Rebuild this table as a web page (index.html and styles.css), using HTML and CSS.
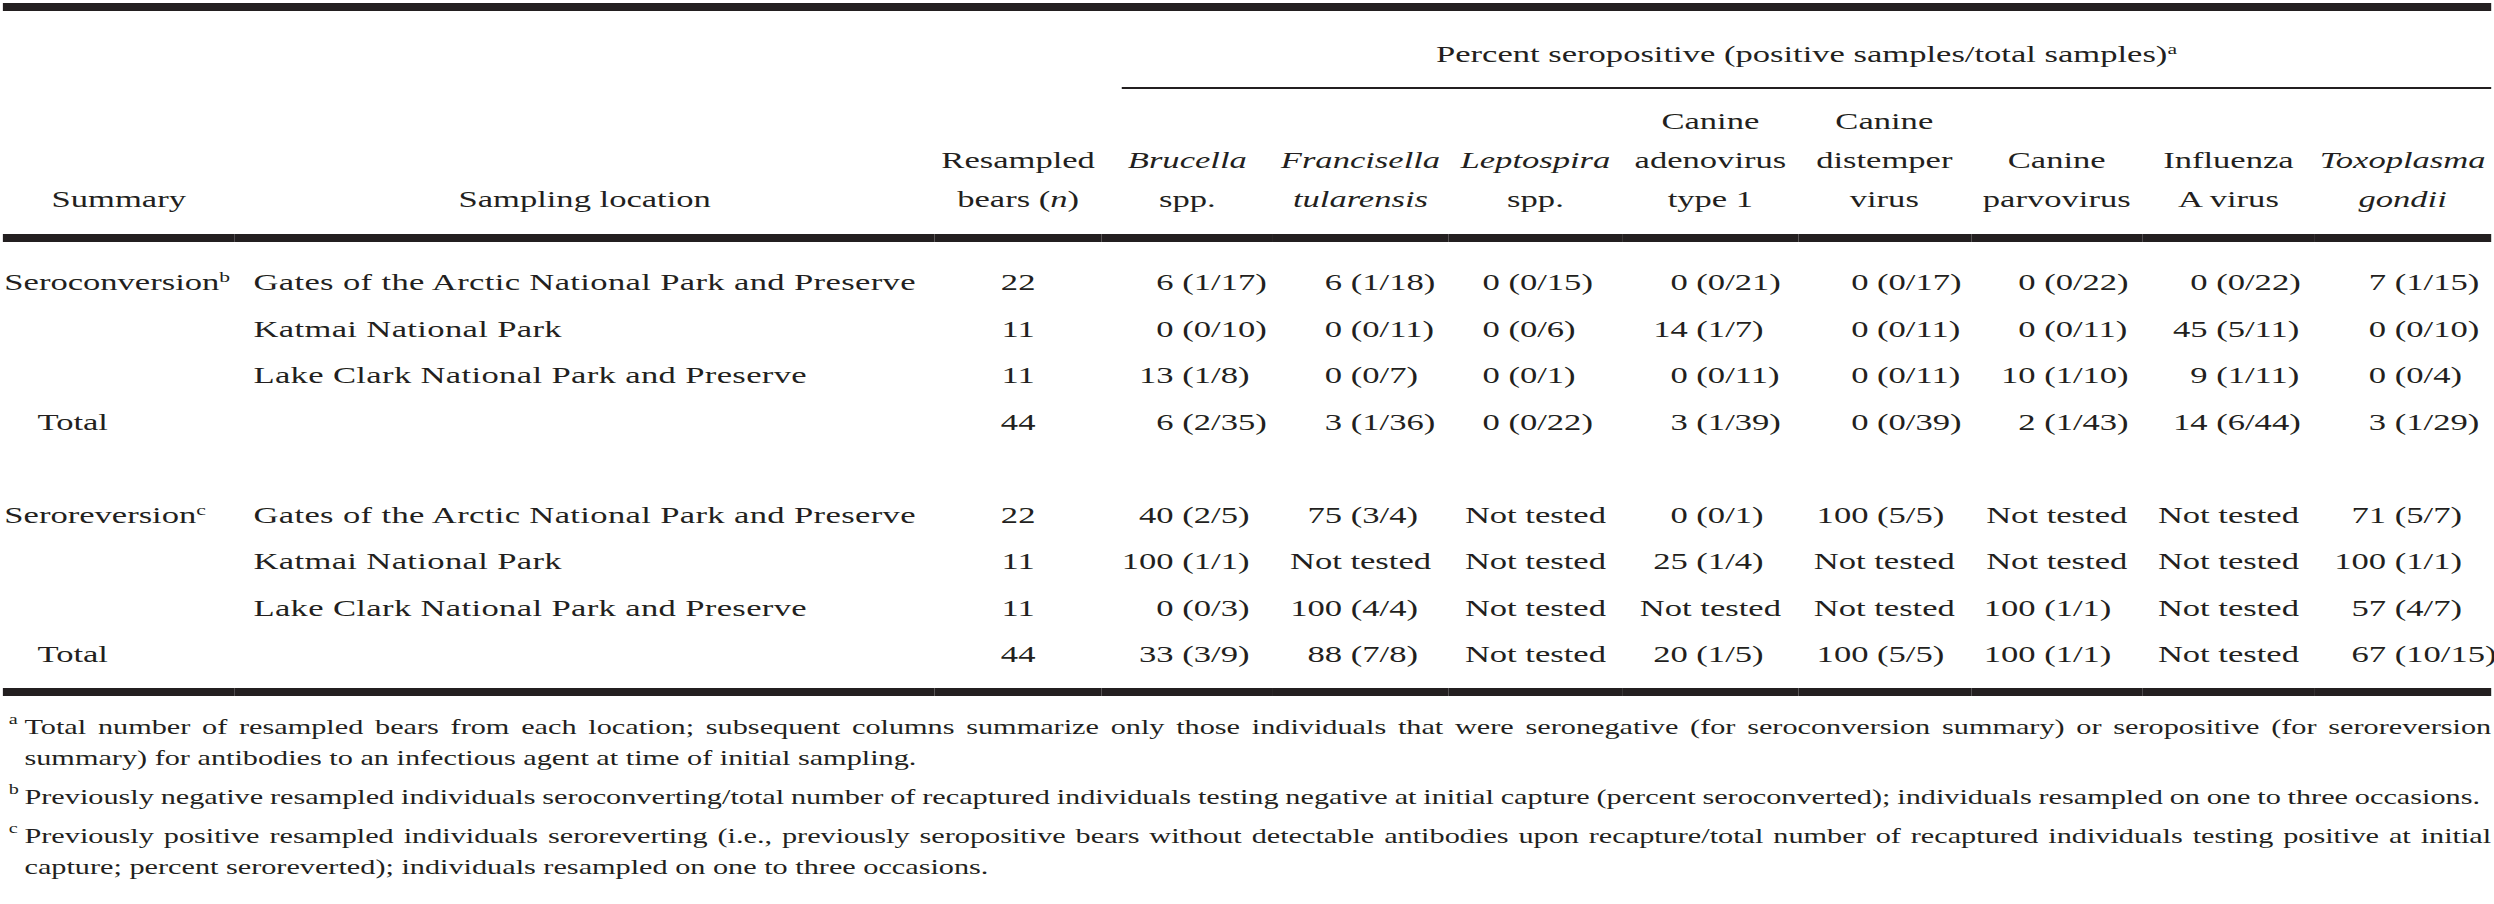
FILE: index.html
```html
<!DOCTYPE html>
<html lang="en">
<head>
<meta charset="utf-8">
<title>Seroconversion and seroreversion</title>
<link rel="stylesheet" href="styles.css">
</head>
<body>
<div class="sheet">
  <table class="tbl">
    <colgroup>
      <col class="w-sum"><col class="w-loc"><col class="w-n">
      <col class="w-d1"><col class="w-d2"><col class="w-d3"><col class="w-d4">
      <col class="w-d5"><col class="w-d6"><col class="w-d7"><col class="w-d8">
    </colgroup>
    <thead>
      <tr class="h1">
        <th colspan="3"></th>
        <th colspan="8" class="spanhead"><div class="spanline">Percent seropositive (positive samples/total samples)<sup>a</sup></div></th>
      </tr>
      <tr class="h2">
        <th>Summary</th>
        <th>Sampling location</th>
        <th>Resampled<br>bears (<i>n</i>)</th>
        <th><i>Brucella</i><br>spp.</th>
        <th><i>Francisella</i><br><i>tularensis</i></th>
        <th><i>Leptospira</i><br>spp.</th>
        <th>Canine<br>adenovirus<br>type 1</th>
        <th>Canine<br>distemper<br>virus</th>
        <th>Canine<br>parvovirus</th>
        <th>Influenza<br>A virus</th>
        <th><i>Toxoplasma</i><br><i>gondii</i></th>
      </tr>
    </thead>
    <tbody>
      <tr class="first">
        <td class="sum">Seroconversion<sup>b</sup></td>
        <td class="loc">Gates of the Arctic National Park and Preserve</td>
        <td class="cnt">22</td>
        <td class="v"><span class="n">6</span> (1/17)</td>
        <td class="v"><span class="n">6</span> (1/18)</td>
        <td class="v"><span class="n">0</span> (0/15)</td>
        <td class="v"><span class="n">0</span> (0/21)</td>
        <td class="v"><span class="n">0</span> (0/17)</td>
        <td class="v"><span class="n">0</span> (0/22)</td>
        <td class="v"><span class="n">0</span> (0/22)</td>
        <td class="v"><span class="n">7</span> (1/15)</td>
      </tr>
      <tr>
        <td class="sum"></td>
        <td class="loc">Katmai National Park</td>
        <td class="cnt">11</td>
        <td class="v"><span class="n">0</span> (0/10)</td>
        <td class="v"><span class="n">0</span> (0/11)</td>
        <td class="v"><span class="n">0</span> (0/6)</td>
        <td class="v"><span class="n">14</span> (1/7)</td>
        <td class="v"><span class="n">0</span> (0/11)</td>
        <td class="v"><span class="n">0</span> (0/11)</td>
        <td class="v"><span class="n">45</span> (5/11)</td>
        <td class="v"><span class="n">0</span> (0/10)</td>
      </tr>
      <tr>
        <td class="sum"></td>
        <td class="loc">Lake Clark National Park and Preserve</td>
        <td class="cnt">11</td>
        <td class="v"><span class="n">13</span> (1/8)</td>
        <td class="v"><span class="n">0</span> (0/7)</td>
        <td class="v"><span class="n">0</span> (0/1)</td>
        <td class="v"><span class="n">0</span> (0/11)</td>
        <td class="v"><span class="n">0</span> (0/11)</td>
        <td class="v"><span class="n">10</span> (1/10)</td>
        <td class="v"><span class="n">9</span> (1/11)</td>
        <td class="v"><span class="n">0</span> (0/4)</td>
      </tr>
      <tr>
        <td class="sum total">Total</td>
        <td class="loc"></td>
        <td class="cnt">44</td>
        <td class="v"><span class="n">6</span> (2/35)</td>
        <td class="v"><span class="n">3</span> (1/36)</td>
        <td class="v"><span class="n">0</span> (0/22)</td>
        <td class="v"><span class="n">3</span> (1/39)</td>
        <td class="v"><span class="n">0</span> (0/39)</td>
        <td class="v"><span class="n">2</span> (1/43)</td>
        <td class="v"><span class="n">14</span> (6/44)</td>
        <td class="v"><span class="n">3</span> (1/29)</td>
      </tr>
      <tr class="gap">
        <td></td><td></td><td></td><td></td><td></td><td></td><td></td><td></td><td></td><td></td><td></td>
      </tr>
      <tr>
        <td class="sum">Seroreversion<sup>c</sup></td>
        <td class="loc">Gates of the Arctic National Park and Preserve</td>
        <td class="cnt">22</td>
        <td class="v"><span class="n">40</span> (2/5)</td>
        <td class="v"><span class="n">75</span> (3/4)</td>
        <td class="nt">Not tested</td>
        <td class="v"><span class="n">0</span> (0/1)</td>
        <td class="v"><span class="n">100</span> (5/5)</td>
        <td class="nt">Not tested</td>
        <td class="nt">Not tested</td>
        <td class="v"><span class="n">71</span> (5/7)</td>
      </tr>
      <tr>
        <td class="sum"></td>
        <td class="loc">Katmai National Park</td>
        <td class="cnt">11</td>
        <td class="v"><span class="n">100</span> (1/1)</td>
        <td class="nt">Not tested</td>
        <td class="nt">Not tested</td>
        <td class="v"><span class="n">25</span> (1/4)</td>
        <td class="nt">Not tested</td>
        <td class="nt">Not tested</td>
        <td class="nt">Not tested</td>
        <td class="v"><span class="n">100</span> (1/1)</td>
      </tr>
      <tr>
        <td class="sum"></td>
        <td class="loc">Lake Clark National Park and Preserve</td>
        <td class="cnt">11</td>
        <td class="v"><span class="n">0</span> (0/3)</td>
        <td class="v"><span class="n">100</span> (4/4)</td>
        <td class="nt">Not tested</td>
        <td class="nt">Not tested</td>
        <td class="nt">Not tested</td>
        <td class="v"><span class="n">100</span> (1/1)</td>
        <td class="nt">Not tested</td>
        <td class="v"><span class="n">57</span> (4/7)</td>
      </tr>
      <tr class="last">
        <td class="sum total">Total</td>
        <td class="loc"></td>
        <td class="cnt">44</td>
        <td class="v"><span class="n">33</span> (3/9)</td>
        <td class="v"><span class="n">88</span> (7/8)</td>
        <td class="nt">Not tested</td>
        <td class="v"><span class="n">20</span> (1/5)</td>
        <td class="v"><span class="n">100</span> (5/5)</td>
        <td class="v"><span class="n">100</span> (1/1)</td>
        <td class="nt">Not tested</td>
        <td class="v"><span class="n">67</span> (10/15)</td>
      </tr>
    </tbody>
  </table>

  <div class="notes">
    <p class="note">
      <span class="line just"><span class="mk">a</span>Total number of resampled bears from each location; subsequent columns summarize only those individuals that were seronegative (for seroconversion summary) or seropositive (for seroreversion</span>
      <span class="line">summary) for antibodies to an infectious agent at time of initial sampling.</span>
    </p>
    <p class="note">
      <span class="line tight"><span class="mk">b</span>Previously negative resampled individuals seroconverting/total number of recaptured individuals testing negative at initial capture (percent seroconverted); individuals resampled on one to three occasions.</span>
    </p>
    <p class="note">
      <span class="line just"><span class="mk">c</span>Previously positive resampled individuals seroreverting (i.e., previously seropositive bears without detectable antibodies upon recapture/total number of recaptured individuals testing positive at initial</span>
      <span class="line">capture; percent seroreverted); individuals resampled on one to three occasions.</span>
    </p>
  </div>
</div>
</body>
</html>
```

FILE: styles.css
```css
* {
  box-sizing: border-box;
  margin: 0;
  padding: 0;
}

html, body {
  background: #ffffff;
}

body {
  width: 2494px;
  height: 904px;
  overflow: hidden;
  font-family: "Liberation Serif", "Times New Roman", serif;
  color: #231f20;
}

/* the source table is set in a wide face: the whole sheet is widened */
.sheet {
  width: 1732px;
  padding: 3px 2px 0;
  transform: scaleX(1.44);
  transform-origin: 0 0;
}

.tbl {
  width: 1728px;
  table-layout: fixed;
  border-collapse: separate;
  border-spacing: 0;
  border-top: 8px solid #231f20;
  font-size: 24px;
}

.w-sum { width: 161px; }
.w-loc { width: 486px; }
.w-n   { width: 116px; }
.w-d1  { width: 119px; }
.w-d2  { width: 121.5px; }
.w-d3  { width: 121.5px; }
.w-d4  { width: 121.5px; }
.w-d5  { width: 120px; }
.w-d6  { width: 119.5px; }
.w-d7  { width: 119px; }
.w-d8  { width: 122.8px; }

.tbl th {
  font-weight: normal;
  text-align: center;
}

.tbl i {
  font-style: italic;
}

.tbl sup {
  font-size: 15px;
  line-height: 0;
  vertical-align: 8px;
}

/* spanning header */
.h1 th {
  padding: 23px 0 0;
  vertical-align: bottom;
}

.spanline {
  margin-left: 14px;
  line-height: 40px;
  padding-bottom: 13px;
  border-bottom: 2px solid #231f20;
}

/* column headers */
.h2 th {
  padding: 13px 0 15px;
  line-height: 39px;
  vertical-align: bottom;
  border-bottom: 8px solid #231f20;
  white-space: nowrap;
}

/* body */
.tbl td {
  line-height: 46.5px;
  white-space: nowrap;
  vertical-align: baseline;
}

.tbl tr.first td {
  padding-top: 17px;
}

.tbl tr.last td {
  padding-bottom: 10.5px;
  border-bottom: 8px solid #231f20;
}

.tbl tr.gap td {
  height: 46.5px;
}

.sum {
  text-align: left;
  padding-left: 1px;
}

.sum.total {
  padding-left: 24px;
}

.loc {
  text-align: left;
  padding-left: 13px;
  letter-spacing: 0.25px;
}

.cnt {
  text-align: center;
}

.v {
  text-align: left;
}

.n {
  display: inline-block;
  width: 36px;
  text-align: right;
}

.nt {
  text-align: center;
}

/* paren alignment per column */
.tbl td.v:nth-child(4)  { padding-left: 14px; }
.tbl td.v:nth-child(5)  { padding-left: 12px; }
.tbl td.v:nth-child(6)  { padding-left: 0; }
.tbl td.v:nth-child(7)  { padding-left: 9px; }
.tbl td.v:nth-child(8)  { padding-left: 13px; }
.tbl td.v:nth-child(9)  { padding-left: 9px; }
.tbl td.v:nth-child(10) { padding-left: 9px; }
.tbl td.v:nth-child(11) { padding-left: 14px; }

/* footnotes */
.notes {
  width: 1728px;
  padding-top: 16px;
  font-size: 21px;
  line-height: 31px;
}

.note + .note {
  margin-top: 8px;
}

.line {
  display: block;
  padding-left: 15px;
  white-space: nowrap;
}

.line.just {
  white-space: normal;
  text-align: justify;
  text-align-last: justify;
}

.line.tight {
  word-spacing: -0.5px;
}

.mk {
  display: inline-block;
  width: 11px;
  margin-left: -11px;
  font-size: 14px;
  line-height: 0;
  vertical-align: 10px;
}
```
